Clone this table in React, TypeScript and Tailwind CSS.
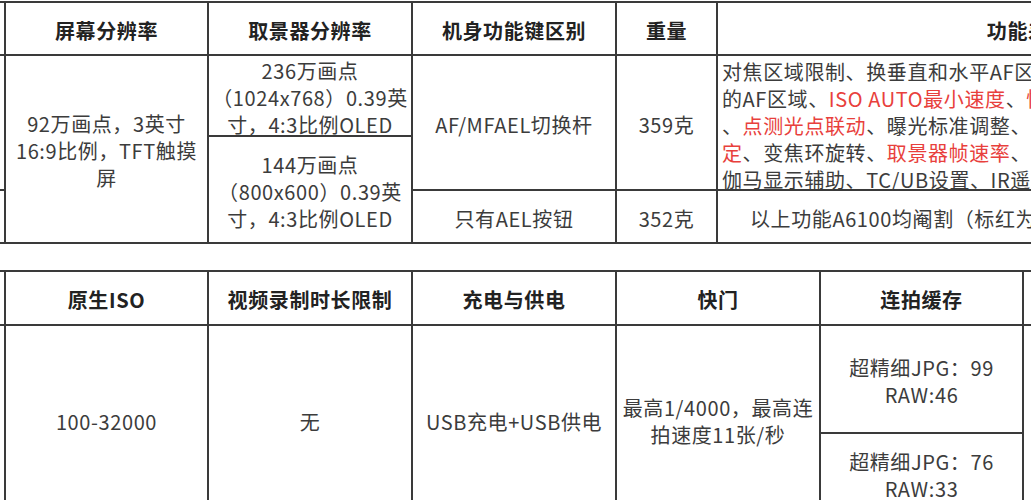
export default function App() {
  const cell = 'bg-white flex items-center justify-center text-center pt-[3px]';
  const head = `${cell} font-bold text-[#222]`;
  const red = 'text-[#e8403c]';

  return (
    <div className="w-[1031px] h-[500px] overflow-hidden bg-white text-[20px] leading-[27px] tracking-[0.6px] text-[#3c3c3c] font-['Noto_Sans_CJK_SC','Microsoft_YaHei',sans-serif]">
      {/* Body and feature table */}
      <div className="pt-px">
        <div className="grid w-max gap-[2px] bg-[#3a3a3a] py-[2px] grid-cols-[4px_201px_202px_202px_99px_620px] grid-rows-[51px_133px_51px]">
          <div className="bg-white" />
          <div className={head}>屏幕分辨率</div>
          <div className={head}>取景器分辨率</div>
          <div className={head}>机身功能键区别</div>
          <div className={head}>重量</div>
          <div className={head}>功能差异</div>

          <div className="bg-white" />
          <div className={`${cell} row-span-2`}>
            <div>
              92万画点，3英寸
              <br />
              16:9比例，TFT触摸
              <br />
              屏
            </div>
          </div>
          <div className="row-span-2 flex flex-col gap-[2px]">
            <div className={`${cell} h-[79px] whitespace-nowrap`}>
              <div>
                236万画点
                <br />
                （1024x768）0.39英
                <br />
                寸，4:3比例OLED
              </div>
            </div>
            <div className={`${cell} flex-1 whitespace-nowrap`}>
              <div>
                144万画点
                <br />
                （800x600）0.39英
                <br />
                寸，4:3比例OLED
              </div>
            </div>
          </div>
          <div className={cell}>AF/MFAEL切换杆</div>
          <div className={cell}>359克</div>
          <div className="bg-white pl-[4px] pt-[2px] whitespace-nowrap overflow-visible">
            <div>对焦区域限制、换垂直和水平AF区域时切换注册</div>
            <div>
              的AF区域、<span className={red}>ISO AUTO最小速度</span>、<span className={red}>快门速度</span>
            </div>
            <div>
              、<span className={red}>点测光点联动</span>、曝光标准调整、<span className={red}>曝光锁</span>
            </div>
            <div>
              <span className={red}>定</span>、变焦环旋转、<span className={red}>取景器帧速率</span>、触摸操作
            </div>
            <div>伽马显示辅助、TC/UB设置、IR遥控</div>
          </div>

          <div className="bg-white" />
          <div className={cell}>只有AEL按钮</div>
          <div className={cell}>352克</div>
          <div className="bg-white flex items-center pt-[3px] pl-[32px] whitespace-nowrap">
            以上功能A6100均阉割（标红为A6100没有的功能）
          </div>
        </div>
      </div>

      {/* Sensor and shooting table */}
      <div className="mt-[26px]">
        <div className="grid w-max gap-[2px] bg-[#3a3a3a] pt-[2px] grid-cols-[4px_201px_202px_202px_202px_201px_300px] grid-rows-[52px_187px]">
          <div className="bg-white" />
          <div className={head}>原生ISO</div>
          <div className={head}>视频录制时长限制</div>
          <div className={head}>充电与供电</div>
          <div className={head}>快门</div>
          <div className={head}>连拍缓存</div>
          <div className={head}>防抖</div>

          <div className="bg-white" />
          <div className={cell}>100-32000</div>
          <div className={cell}>无</div>
          <div className={cell}>USB充电+USB供电</div>
          <div className={cell}>
            <div>
              最高1/4000，最高连
              <br />
              拍速度11张/秒
            </div>
          </div>
          <div className="flex flex-col gap-[2px]">
            <div className={`${cell} h-[106px]`}>
              <div>
                超精细JPG：99
                <br />
                RAW:46
              </div>
            </div>
            <div className={`${cell} flex-1`}>
              <div>
                超精细JPG：76
                <br />
                RAW:33
              </div>
            </div>
          </div>
          <div className="bg-white" />
        </div>
      </div>
    </div>
  );
}
